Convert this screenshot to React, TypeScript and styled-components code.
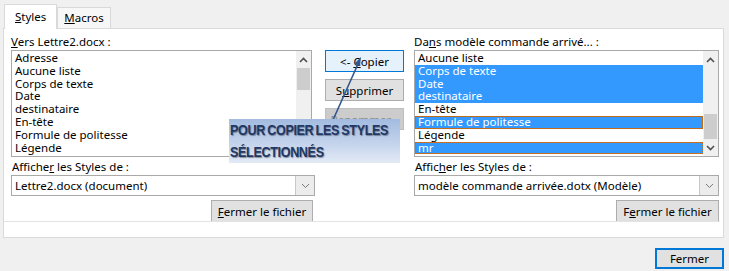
import React, { FC } from 'react'
import styled, { createGlobalStyle } from 'styled-components'

const GlobalStyle = createGlobalStyle`
  html, body {
    margin: 0;
    padding: 0;
    background: #f0f0f0;
  }
  body {
    font-family: 'Noto Sans', 'Open Sans', sans-serif;
    font-size: 11.5px;
    color: #000;
  }
`

const Dialog = styled.div`
  position: relative;
  width: 729px;
  height: 271px;
  display: flex;
  flex-direction: column;
  background: #f0f0f0;
  overflow: hidden;
`

const TabStrip = styled.div`
  display: flex;
  align-items: flex-end;
  height: 28px;
  padding-left: 4px;
  box-sizing: border-box;
`

const Tab = styled.div<{ active?: boolean }>`
  height: ${({ active }) => (active ? 25 : 21)}px;
  padding: 0 ${({ active }) => (active ? 10 : 6)}px;
  display: flex;
  align-items: center;
  box-sizing: border-box;
  background: ${({ active }) => (active ? '#ffffff' : '#f7f7f7')};
  border: 1px solid #d9d9d9;
  border-bottom: none;
  margin-bottom: ${({ active }) => (active ? -1 : 0)}px;
  position: relative;
  z-index: ${({ active }) => (active ? 1 : 0)};
  line-height: 14px;
`

const Panel = styled.div`
  margin: 0 5px 0 3px;
  height: 210px;
  box-sizing: border-box;
  border: 1px solid #d9d9d9;
  background: #ffffff;
  display: flex;
  flex-direction: column;
`

const Columns = styled.div`
  display: grid;
  grid-template-columns: 304px 79px 305px;
  column-gap: 10px;
  padding: 6px 0 0 7px;
  height: 192px;
  box-sizing: border-box;
`

const Column = styled.div`
  display: flex;
  flex-direction: column;
`

const Label = styled.div`
  height: 14px;
  line-height: 14px;
  margin-bottom: 1px;
  white-space: nowrap;
`

const ListBox = styled.div<{ trim?: number }>`
  height: 107px;
  margin-right: ${({ trim }) => trim || 0}px;
  border: 1px solid #a9a9a9;
  box-sizing: border-box;
  display: flex;
  background: #fff;
`

const Items = styled.div`
  flex: 1;
  padding-top: 1px;
  overflow: hidden;
`

const Item = styled.div<{ selected?: boolean; focus?: 'solid' | 'dotted' }>`
  height: 12.8px;
  line-height: 12.8px;
  padding-left: 3px;
  box-sizing: border-box;
  white-space: nowrap;
  background: ${({ selected }) => (selected ? '#3399ff' : 'transparent')};
  color: ${({ selected }) => (selected ? '#ffffff' : '#000000')};
  outline: ${({ focus }) =>
    focus === 'solid'
      ? '1px solid #c06a1c'
      : focus === 'dotted'
        ? '1px dotted #c06a1c'
        : 'none'};
  outline-offset: -1px;
`

const ScrollBar = styled.div`
  width: 15px;
  display: flex;
  flex-direction: column;
  background: #f0f0f0;
`

const ScrollArrow = styled.div`
  height: 17px;
  display: flex;
  align-items: center;
  justify-content: center;
`

const Track = styled.div<{ thumbAt: 'start' | 'end' }>`
  flex: 1;
  display: flex;
  flex-direction: column;
  justify-content: ${({ thumbAt }) =>
    thumbAt === 'start' ? 'flex-start' : 'flex-end'};
`

const Thumb = styled.div<{ size: number }>`
  height: ${({ size }) => size}px;
  margin: 0 1px;
  background: #cdcdcd;
`

const Combo = styled.div`
  margin-top: 1px;
  height: 21px;
  border: 1px solid #a9a9a9;
  box-sizing: border-box;
  display: flex;
  background: #fff;
`

const ComboText = styled.div`
  flex: 1;
  padding-left: 3px;
  line-height: 19px;
  white-space: nowrap;
`

const ComboButton = styled.div`
  width: 18px;
  border-left: 1px solid #c8c8c8;
  background: #ececec;
  display: flex;
  align-items: center;
  justify-content: center;
`

const SubLabel = styled(Label)`
  margin-top: 3px;
  margin-bottom: 0;
  padding-left: 1px;
`

const ButtonRow = styled.div<{ inset?: number }>`
  display: flex;
  justify-content: flex-end;
  margin-top: 4px;
  padding-right: ${({ inset }) => inset || 0}px;
`

const Button = styled.div<{
  width: number
  variant?: 'default' | 'disabled' | 'normal'
}>`
  width: ${({ width }) => width}px;
  height: 22px;
  box-sizing: border-box;
  display: flex;
  align-items: center;
  justify-content: center;
  white-space: pre;
  border: 1px solid
    ${({ variant }) =>
      variant === 'default'
        ? '#0078d7'
        : variant === 'disabled'
          ? '#bfbfbf'
          : '#adadad'};
  background: ${({ variant }) =>
    variant === 'default'
      ? '#e5f1fb'
      : variant === 'disabled'
        ? '#cccccc'
        : '#e1e1e1'};
  color: ${({ variant }) => (variant === 'disabled' ? '#8a8a8a' : '#000')};
`

const MiddleColumn = styled.div`
  display: flex;
  flex-direction: column;
  gap: 7px;
  padding-top: 15px;
`

const FooterStrip = styled.div`
  flex: 1;
  border-top: 1px solid #e3e3e3;
  margin-right: 3px;
`

const BottomBar = styled.div`
  display: flex;
  justify-content: flex-end;
  padding: 10px 5px 0 0;
`

const CloseButton = styled.div`
  width: 69px;
  height: 21px;
  box-sizing: border-box;
  border: 2px solid #0078d7;
  background: #e1e1e1;
  display: flex;
  align-items: center;
  justify-content: center;
`

const Callout = styled.div`
  position: absolute;
  left: 229px;
  top: 119px;
  width: 171px;
  height: 44px;
  box-sizing: border-box;
  padding-left: 1px;
  background: linear-gradient(180deg, #a2bbe0 0%, #c3d3ec 55%, #e3eaf5 100%);
  overflow: hidden;
`

const CalloutText = styled.div`
  transform: scaleX(0.9);
  transform-origin: left center;
  font-family: 'Liberation Sans', Arial, sans-serif;
  font-weight: bold;
  font-size: 14px;
  letter-spacing: -0.4px;
  word-spacing: -1px;
  line-height: 22px;
  color: #1f3864;
  text-shadow: 1px 1px 1px rgba(40, 40, 60, 0.45);
  white-space: nowrap;
`

const ArrowLayer = styled.svg`
  position: absolute;
  left: 0;
  top: 0;
  pointer-events: none;
`

const Chevron: FC<{ dir: 'up' | 'down'; bold?: boolean }> = ({ dir, bold }) => (
  <svg width="9" height="6" viewBox="0 0 9 6">
    <polyline
      points={dir === 'up' ? '1,5 4.5,1.5 8,5' : '1,1 4.5,4.5 8,1'}
      fill="none"
      stroke={bold ? '#505050' : '#7a7a7a'}
      strokeWidth={bold ? 1.6 : 1}
    />
  </svg>
)

const leftItems = [
  'Adresse',
  'Aucune liste',
  'Corps de texte',
  'Date',
  'destinataire',
  'En-tête',
  'Formule de politesse',
  'Légende',
]

const rightItems: { name: string; selected?: boolean; focus?: 'solid' | 'dotted' }[] = [
  { name: 'Aucune liste' },
  { name: 'Corps de texte', selected: true },
  { name: 'Date', selected: true },
  { name: 'destinataire', selected: true },
  { name: 'En-tête' },
  { name: 'Formule de politesse', selected: true, focus: 'solid' },
  { name: 'Légende' },
  { name: 'mr', selected: true, focus: 'dotted' },
]

const App: FC = () => {
  return (
    <Dialog>
      <GlobalStyle />
      <TabStrip>
        <Tab active>
          <u>S</u>tyles
        </Tab>
        <Tab>
          <u>M</u>acros
        </Tab>
      </TabStrip>
      <Panel>
        <Columns>
          <Column>
            <Label>
              <u>V</u>ers Lettre2.docx :
            </Label>
            <ListBox trim={3}>
              <Items>
                {leftItems.map((name) => (
                  <Item key={name}>{name}</Item>
                ))}
              </Items>
              <ScrollBar>
                <ScrollArrow>
                  <Chevron dir="up" bold />
                </ScrollArrow>
                <Track thumbAt="start">
                  <Thumb size={22} />
                </Track>
                <ScrollArrow>
                  <Chevron dir="down" bold />
                </ScrollArrow>
              </ScrollBar>
            </ListBox>
            <SubLabel>
              Affiche<u>r</u> les Styles de :
            </SubLabel>
            <Combo>
              <ComboText>Lettre2.docx (document)</ComboText>
              <ComboButton>
                <Chevron dir="down" />
              </ComboButton>
            </Combo>
            <ButtonRow inset={2}>
              <Button width={102}>
                <u>F</u>ermer le fichier
              </Button>
            </ButtonRow>
          </Column>

          <MiddleColumn>
            <Button width={79} variant="default">
              {'<- '}
              <u>C</u>opier
            </Button>
            <Button width={79}>
              S<u>u</u>pprimer
            </Button>
            <Button width={79} variant="disabled">
              <u>R</u>enommer...
            </Button>
          </MiddleColumn>

          <Column>
            <Label>
              Da<u>n</u>s modèle commande arrivé... :
            </Label>
            <ListBox>
              <Items>
                {rightItems.map((it) => (
                  <Item key={it.name} selected={it.selected} focus={it.focus}>
                    {it.name}
                  </Item>
                ))}
              </Items>
              <ScrollBar>
                <ScrollArrow>
                  <Chevron dir="up" bold />
                </ScrollArrow>
                <Track thumbAt="end">
                  <Thumb size={25} />
                </Track>
                <ScrollArrow>
                  <Chevron dir="down" bold />
                </ScrollArrow>
              </ScrollBar>
            </ListBox>
            <SubLabel>
              Affic<u>h</u>er les Styles de :
            </SubLabel>
            <Combo>
              <ComboText>modèle commande arrivée.dotx (Modèle)</ComboText>
              <ComboButton>
                <Chevron dir="down" />
              </ComboButton>
            </Combo>
            <ButtonRow>
              <Button width={103}>
                F<u>e</u>rmer le fichier
              </Button>
            </ButtonRow>
          </Column>
        </Columns>
        <FooterStrip />
      </Panel>
      <BottomBar>
        <CloseButton>Fermer</CloseButton>
      </BottomBar>

      <ArrowLayer width="729" height="271">
        <line x1="333" y1="120" x2="358" y2="64" stroke="#34568e" strokeWidth="1.6" />
        <polygon points="361,57 354,64 360,66" fill="#34568e" />
      </ArrowLayer>
      <Callout>
        <CalloutText>
          POUR COPIER LES STYLES
          <br />
          SÉLECTIONNÉS
        </CalloutText>
      </Callout>
    </Dialog>
  )
}

export default App
